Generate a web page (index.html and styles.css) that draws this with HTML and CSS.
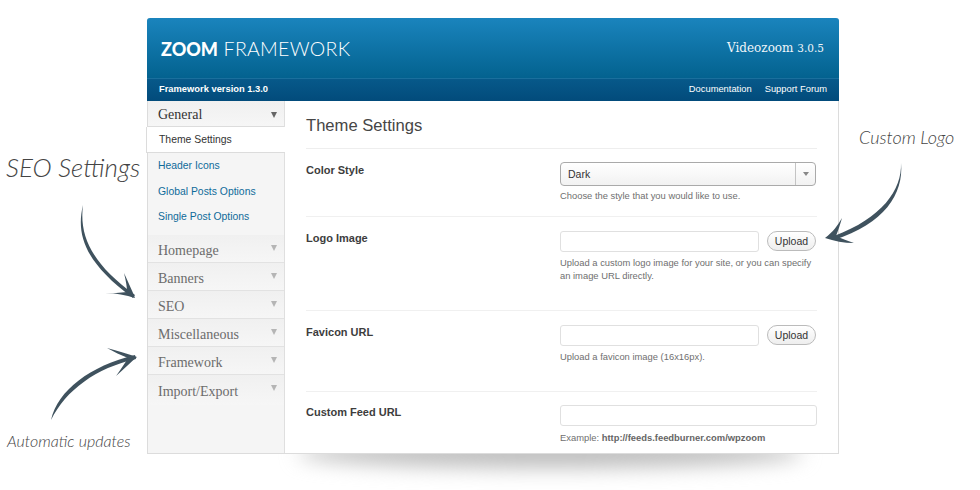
FILE: index.html
```html
<!DOCTYPE html>
<html lang="en">
<head>
    <meta charset="UTF-8">
    <meta name="viewport" content="width=device-width, initial-scale=1.0">
    <title>ZOOM Framework</title>
    <link rel="stylesheet" href="styles.css">
</head>
<body>
    <div class="stage">
        <div class="floor_shadow"></div>

        <div class="window">
            <div class="top_header">
                <div class="logo"><b>ZOOM</b> FRAMEWORK</div>
                <div class="theme_name">Videozoom <span>3.0.5</span></div>
            </div>
            <div class="sub_header">
                <strong>Framework version 1.3.0</strong>
                <div class="sub_links">
                    <a href="#">Documentation</a>
                    <a href="#">Support Forum</a>
                </div>
            </div>

            <div class="panel">
                <div class="sidebar">
                    <div class="menu_head open">General <i class="caret"></i></div>
                    <ul class="sub_menu">
                        <li class="active"><a href="#">Theme Settings</a></li>
                        <li><a href="#">Header Icons</a></li>
                        <li><a href="#">Global Posts Options</a></li>
                        <li><a href="#">Single Post Options</a></li>
                    </ul>
                    <div class="menu_head">Homepage <i class="caret"></i></div>
                    <div class="menu_head">Banners <i class="caret"></i></div>
                    <div class="menu_head">SEO <i class="caret"></i></div>
                    <div class="menu_head">Miscellaneous <i class="caret"></i></div>
                    <div class="menu_head">Framework <i class="caret"></i></div>
                    <div class="menu_head">Import/Export <i class="caret"></i></div>
                </div>

                <div class="content">
                    <h2>Theme Settings</h2>

                    <div class="row row_color">
                        <label>Color Style</label>
                        <div class="field">
                            <div class="select_box"><span>Dark</span><i class="select_arrow"><i class="caret"></i></i></div>
                            <p>Choose the style that you would like to use.</p>
                        </div>
                    </div>

                    <div class="row row_logo">
                        <label>Logo Image</label>
                        <div class="field">
                            <div class="upload_line">
                                <input type="text">
                                <button type="button">Upload</button>
                            </div>
                            <p>Upload a custom logo image for your site, or you can specify an image URL directly.</p>
                        </div>
                    </div>

                    <div class="row row_favicon">
                        <label>Favicon URL</label>
                        <div class="field">
                            <div class="upload_line">
                                <input type="text">
                                <button type="button">Upload</button>
                            </div>
                            <p>Upload a favicon image (16x16px).</p>
                        </div>
                    </div>

                    <div class="row row_feed">
                        <label>Custom Feed URL</label>
                        <div class="field">
                            <input class="wide_input" type="text">
                            <p>Example: <b>http://feeds.feedburner.com/wpzoom</b></p>
                        </div>
                    </div>
                </div>
            </div>
        </div>

        <!-- hand written notes around the window -->
        <div class="note note_seo">SEO Settings</div>
        <div class="note note_updates">Automatic updates</div>
        <div class="note note_logo">Custom Logo</div>

        <svg class="arrows" width="980" height="490" viewBox="0 0 980 490">
            <g fill="#3f525e">
                <path d="M83 205 C76 234 84 262 133 298 L135 295 C92 264 79 236 83 205 Z"/>
                <path d="M105 293 C116 293 126 295 135 298 C132 290 128 282 124 273 C126 281 127 287 127 292 C120 293 112 293 105 293 Z"/>
                <path d="M51 420 C58 390 90 366 135 355 L136 359 C96 368 66 390 51 420 Z"/>
                <path d="M107 348 C118 351 128 354 137 357 C131 362 124 369 116 376 C121 369 125 363 128 358 C121 355 114 352 107 348 Z"/>
                <path d="M901 163 C902 190 882 218 834 236 L834 240 C884 224 904 194 901 163 Z"/>
                <path d="M842 218 C838 225 833 232 825 238 C834 241 844 243 854 243 C847 241 841 238 836 236 C838 231 840 225 842 218 Z"/>
            </g>
        </svg>
    </div>
</body>
</html>
```

FILE: styles.css
```css
* {
    box-sizing: border-box;
}
body {
    margin: 0;
    background-color: white;
    font-family: "Liberation Sans", Arial, sans-serif;
    color: #444;
}
.stage {
    position: relative;
    width: 980px;
    height: 490px;
    padding: 18px 0 0 147px;
    overflow: hidden;
}
.floor_shadow {
    position: absolute;
    left: 298px;
    top: 438px;
    width: 505px;
    height: 30px;
    border-radius: 50%;
    background-color: #bebebe;
    filter: blur(10px);
}
.window {
    position: relative;
    width: 692px;
    height: 436px;
    background-color: white;
    border: 1px solid #dcdcdc;
    border-top: none;
    border-radius: 3px 3px 0 0;
    display: flex;
    flex-direction: column;
}
.top_header {
    height: 60px;
    margin: 0 -1px;
    padding: 0 15px 0 14px;
    display: flex;
    justify-content: space-between;
    align-items: center;
    border-radius: 3px 3px 0 0;
    background: linear-gradient(#1a84bd, #03628f);
    color: white;
}
.logo {
    font-family: Lato, sans-serif;
    font-size: 19.5px;
    font-weight: 300;
    letter-spacing: 0.3px;
    white-space: nowrap;
}
.logo b {
    font-size: 18px;
    font-weight: 900;
    letter-spacing: 0;
}
.theme_name {
    font-family: "DejaVu Serif", serif;
    font-size: 12px;
    color: #f0f6fa;
}
.theme_name span {
    font-size: 10.5px;
}
.sub_header {
    height: 23px;
    margin: 0 -1px;
    padding: 0 12px 3px 12px;
    display: flex;
    justify-content: space-between;
    align-items: center;
    border-top: 1px solid #1a6f9d;
    background: linear-gradient(#07598a, #024b7b);
    font-size: 9.35px;
    color: white;
}
.sub_links {
    display: flex;
    gap: 13px;
}
.sub_links a {
    color: white;
    text-decoration: none;
}
.panel {
    flex: 1;
    display: flex;
    min-height: 0;
}
.sidebar {
    width: 137px;
    flex-shrink: 0;
    background-color: #f5f5f5;
    border-right: 1px solid #dfdfdf;
}
.menu_head {
    position: relative;
    height: 28px;
    padding: 8px 0 0 10px;
    font-family: "Liberation Serif", serif;
    font-size: 14px;
    color: #6c6c6c;
    border-bottom: 1px solid #e2e2e2;
    background: linear-gradient(#f0f0f0, #f6f6f6);
}
.menu_head:last-child {
    height: 30px;
    padding-top: 9px;
    border-bottom: none;
}
.menu_head .caret {
    position: absolute;
    right: 7px;
    top: 10px;
    border-top-color: #b5b5b5;
}
.menu_head.open {
    height: 26px;
    padding-top: 6px;
    color: #333;
    border-bottom: 1px solid #dcdcdc;
}
.menu_head.open .caret {
    top: 11px;
    border-top-color: #666;
}
.caret {
    display: block;
    width: 0;
    height: 0;
    border-left: 3.5px solid transparent;
    border-right: 3.5px solid transparent;
    border-top: 6px solid #666;
}
.sub_menu {
    list-style: none;
    margin: 0 0 6px;
    padding: 0;
}
.sub_menu li {
    height: 25.6px;
    padding: 7.4px 0 0 10px;
    font-size: 10.4px;
}
.sub_menu a {
    color: #0f6b9a;
    text-decoration: none;
}
.sub_menu li.active {
    margin-left: -2px;
    margin-right: -1px;
    padding-left: 12px;
    background-color: white;
    border: 1px solid #dcdcdc;
    border-top: none;
    border-right: none;
}
.sub_menu li.active a {
    color: #333;
}
.content {
    flex: 1;
    padding: 0 21px;
    overflow: hidden;
}
h2 {
    height: 48px;
    margin: 0;
    padding-top: 15px;
    font-size: 16.6px;
    font-weight: normal;
    color: #464646;
    border-bottom: 1px solid #eee;
}
.row {
    display: flex;
    border-bottom: 1px solid #f0f0f0;
}
.row label {
    width: 254px;
    flex-shrink: 0;
    padding-top: 1px;
    font-size: 11px;
    font-weight: bold;
    color: #3d3d3d;
}
.field {
    flex: 1;
}
.field p {
    margin: 0;
    font-size: 9.4px;
    line-height: 13px;
    color: #6f6f6f;
}
.field p b {
    color: #666;
}
.row_color {
    height: 68px;
    padding-top: 13px;
}
.row_color label {
    padding-top: 2px;
}
.row_logo {
    height: 94px;
    padding-top: 14px;
}
.row_favicon {
    height: 81px;
    padding-top: 14px;
}
.row_feed {
    border-bottom: none;
    padding-top: 13px;
}
.select_box {
    display: flex;
    width: 256px;
    height: 24px;
    margin-bottom: 3px;
    border: 1px solid #aaa;
    border-radius: 4px;
    background: linear-gradient(white, #f2f2f2);
    font-size: 10.5px;
    color: #333;
}
.select_box span {
    flex: 1;
    padding: 5px 0 0 7px;
}
.select_arrow {
    width: 20px;
    border-left: 1px solid #c4c4c4;
    display: flex;
    align-items: center;
    justify-content: center;
}
.select_arrow .caret {
    border-top-color: #888;
    border-top-width: 4px;
}
.upload_line {
    display: flex;
    align-items: flex-start;
    gap: 8px;
    width: 256px;
    margin-bottom: 4px;
}
input[type="text"] {
    display: block;
    width: 199px;
    height: 21px;
    border: 1px solid #e0e0e0;
    border-radius: 3px;
    background-color: white;
}
input.wide_input {
    width: 257px;
    margin-bottom: 5px;
}
button {
    width: 49px;
    height: 20px;
    padding: 0;
    border: 1px solid #bbb;
    border-radius: 10px;
    background: linear-gradient(white, #eee);
    font-family: "Liberation Sans", Arial, sans-serif;
    font-size: 10.5px;
    color: #333;
}
.note {
    position: absolute;
    font-family: Lato, sans-serif;
    font-style: italic;
    font-weight: 300;
    color: #444;
    white-space: nowrap;
}
.note_seo {
    left: 6px;
    top: 151px;
    font-size: 26px;
}
.note_updates {
    left: 7px;
    top: 431px;
    font-size: 16px;
}
.note_logo {
    left: 859px;
    top: 126px;
    font-size: 18px;
}
.arrows {
    position: absolute;
    left: 0;
    top: 0;
    pointer-events: none;
}
```
